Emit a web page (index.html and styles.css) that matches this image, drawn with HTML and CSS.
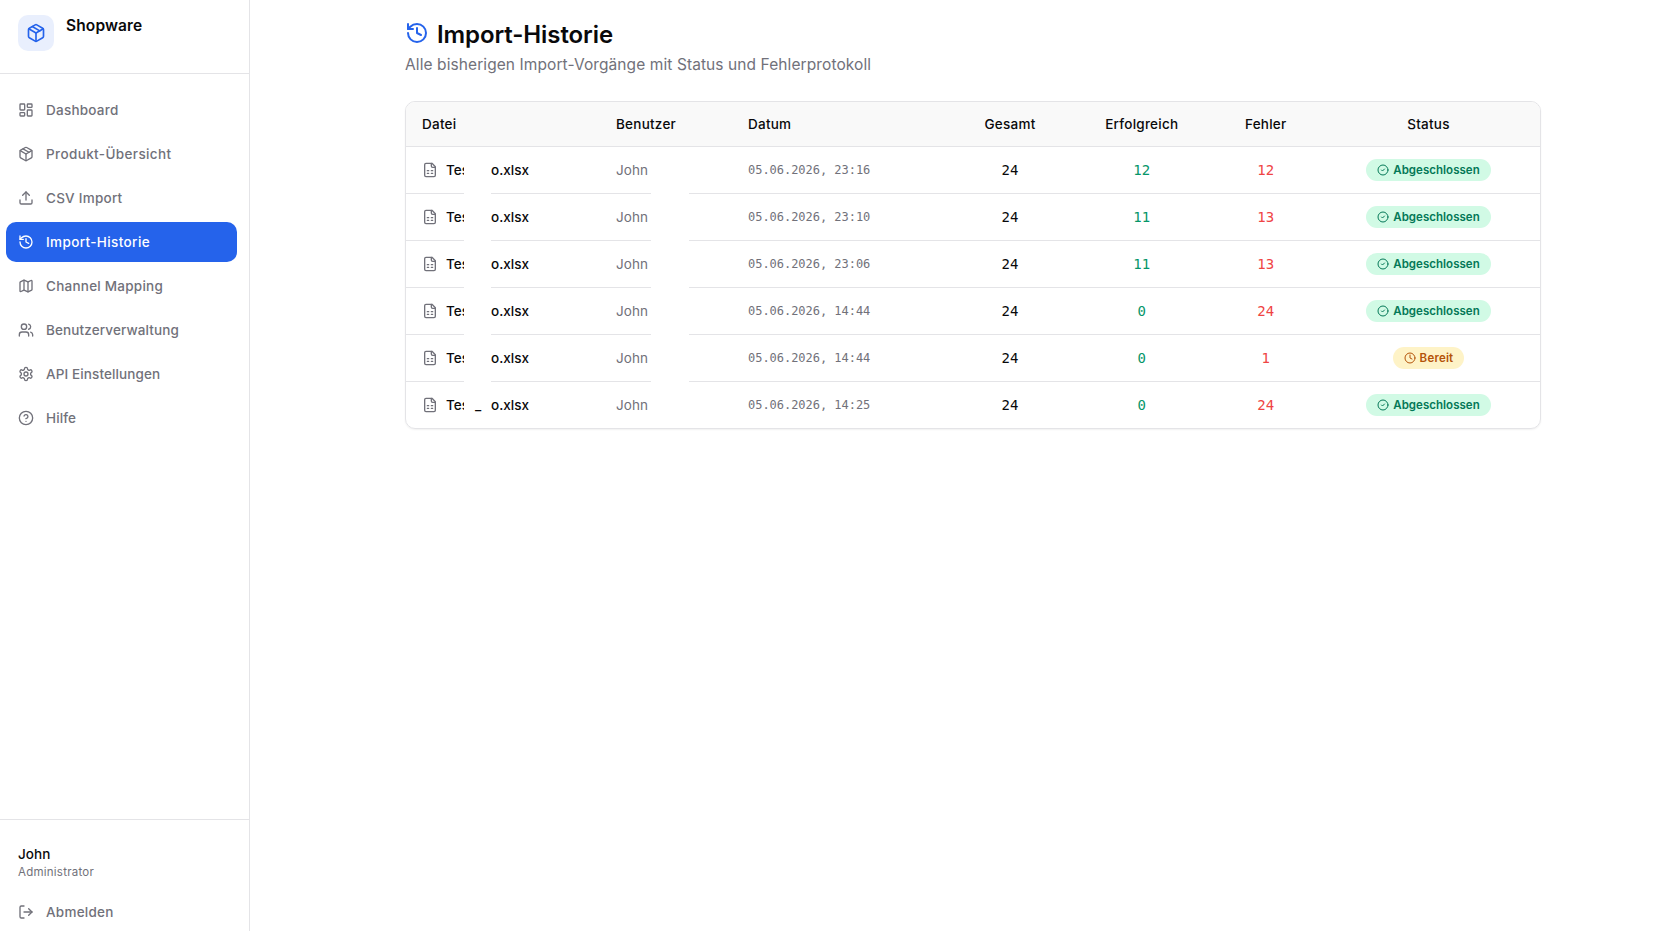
FILE: index.html
```html
<!DOCTYPE html>
<html lang="de">
<head>
<meta charset="utf-8">
<title>Import-Historie</title>
<link rel="stylesheet" href="styles.css">
</head>
<body>
<svg class="sprite" aria-hidden="true">
  <symbol id="box" viewBox="0 0 24 24"><path d="m7.5 4.27 9 5.15"/><path d="M21 8a2 2 0 0 0-1-1.73l-7-4a2 2 0 0 0-2 0l-7 4A2 2 0 0 0 3 8v8a2 2 0 0 0 1 1.73l7 4a2 2 0 0 0 2 0l7-4A2 2 0 0 0 21 16Z"/><path d="m3.3 7 8.7 5 8.7-5"/><path d="M12 22V12"/></symbol>
  <symbol id="dash" viewBox="0 0 24 24"><rect width="7" height="9" x="3" y="3" rx="1"/><rect width="7" height="5" x="14" y="3" rx="1"/><rect width="7" height="9" x="14" y="12" rx="1"/><rect width="7" height="5" x="3" y="16" rx="1"/></symbol>
  <symbol id="upload" viewBox="0 0 24 24"><path d="M21 15v4a2 2 0 0 1-2 2H5a2 2 0 0 1-2-2v-4"/><path d="m17 8-5-5-5 5"/><path d="M12 3v12"/></symbol>
  <symbol id="history" viewBox="0 0 24 24"><path d="M3 12a9 9 0 1 0 9-9 9.75 9.75 0 0 0-6.74 2.74L3 8"/><path d="M3 3v5h5"/><path d="M12 7v5l4 2"/></symbol>
  <symbol id="map" viewBox="0 0 24 24"><path d="M14.106 5.553a2 2 0 0 0 1.788 0l3.659-1.83A1 1 0 0 1 21 4.619v12.764a1 1 0 0 1-.553.894l-4.553 2.277a2 2 0 0 1-1.788 0l-4.212-2.106a2 2 0 0 0-1.788 0l-3.659 1.83A1 1 0 0 1 3 19.381V6.618a1 1 0 0 1 .553-.894l4.553-2.277a2 2 0 0 1 1.788 0z"/><path d="M15 5.764v15"/><path d="M9 3.236v15"/></symbol>
  <symbol id="users" viewBox="0 0 24 24"><path d="M16 21v-2a4 4 0 0 0-4-4H6a4 4 0 0 0-4 4v2"/><circle cx="9" cy="7" r="4"/><path d="M22 21v-2a4 4 0 0 0-3-3.87"/><path d="M16 3.13a4 4 0 0 1 0 7.75"/></symbol>
  <symbol id="gear" viewBox="0 0 24 24"><path d="M12.22 2h-.44a2 2 0 0 0-2 2v.18a2 2 0 0 1-1 1.73l-.43.25a2 2 0 0 1-2 0l-.15-.08a2 2 0 0 0-2.73.73l-.22.38a2 2 0 0 0 .73 2.73l.15.1a2 2 0 0 1 1 1.72v.51a2 2 0 0 1-1 1.74l-.15.09a2 2 0 0 0-.73 2.73l.22.38a2 2 0 0 0 2.73.73l.15-.08a2 2 0 0 1 2 0l.43.25a2 2 0 0 1 1 1.73V20a2 2 0 0 0 2 2h.44a2 2 0 0 0 2-2v-.18a2 2 0 0 1 1-1.73l.43-.25a2 2 0 0 1 2 0l.15.08a2 2 0 0 0 2.73-.73l.22-.39a2 2 0 0 0-.73-2.73l-.15-.08a2 2 0 0 1-1-1.74v-.5a2 2 0 0 1 1-1.74l.15-.09a2 2 0 0 0 .73-2.73l-.22-.38a2 2 0 0 0-2.73-.73l-.15.08a2 2 0 0 1-2 0l-.43-.25a2 2 0 0 1-1-1.73V4a2 2 0 0 0-2-2z"/><circle cx="12" cy="12" r="3"/></symbol>
  <symbol id="help" viewBox="0 0 24 24"><circle cx="12" cy="12" r="10"/><path d="M9.09 9a3 3 0 0 1 5.83 1c0 2-3 3-3 3"/><path d="M12 17h.01"/></symbol>
  <symbol id="logout" viewBox="0 0 24 24"><path d="M9 21H5a2 2 0 0 1-2-2V5a2 2 0 0 1 2-2h4"/><path d="m16 17 5-5-5-5"/><path d="M21 12H9"/></symbol>
  <symbol id="sheet" viewBox="0 0 24 24"><path d="M15 2H6a2 2 0 0 0-2 2v16a2 2 0 0 0 2 2h12a2 2 0 0 0 2-2V7Z"/><path d="M14 2v4a2 2 0 0 0 2 2h4"/><path d="M8 13h2M14 13h2M8 17h2M14 17h2"/></symbol>
  <symbol id="check" viewBox="0 0 24 24"><circle cx="12" cy="12" r="10"/><path d="m9 12 2 2 4-4"/></symbol>
  <symbol id="clock" viewBox="0 0 24 24"><circle cx="12" cy="12" r="10"/><path d="M12 6v6l4 2"/></symbol>
</svg>
<div class="app">
  <aside class="sidebar">
    <div class="brand">
      <span class="logo"><svg class="icon i20"><use href="#box"/></svg></span>
      <span class="brand-name">Shopware</span>
    </div>
    <nav class="nav">
      <a class="item"><svg class="icon"><use href="#dash"/></svg><span>Dashboard</span></a>
      <a class="item wide"><svg class="icon"><use href="#box"/></svg><span>Produkt-Übersicht</span></a>
      <a class="item"><svg class="icon"><use href="#upload"/></svg><span>CSV Import</span></a>
      <a class="item wide active"><svg class="icon"><use href="#history"/></svg><span>Import-Historie</span></a>
      <a class="item"><svg class="icon"><use href="#map"/></svg><span>Channel Mapping</span></a>
      <a class="item tight"><svg class="icon"><use href="#users"/></svg><span>Benutzerverwaltung</span></a>
      <a class="item tight"><svg class="icon"><use href="#gear"/></svg><span>API Einstellungen</span></a>
      <a class="item tight"><svg class="icon"><use href="#help"/></svg><span>Hilfe</span></a>
    </nav>
    <div class="account">
      <div class="user">John</div>
      <div class="role">Administrator</div>
      <a class="item logout"><svg class="icon"><use href="#logout"/></svg><span>Abmelden</span></a>
    </div>
  </aside>
  <main class="main">
    <h1 class="title"><svg class="icon i24"><use href="#history"/></svg><span>Import-Historie</span></h1>
    <p class="subtitle">Alle bisherigen Import-Vorgänge mit Status und Fehlerprotokoll</p>
    <div class="table">
      <div class="row head"><div>Datei</div><div>Benutzer</div><div>Datum</div><div class="c">Gesamt</div><div class="c">Erfolgreich</div><div class="c">Fehler</div><div class="c">Status</div></div>
      <div class="row"><div class="file"><svg class="icon"><use href="#sheet"/></svg><span class="pre">Tes</span><span class="gap"></span><span>o.xlsx</span></div><div class="by">John</div><div class="date">05.06.2026, 23:16</div><div class="c num">24</div><div class="c num ok">12</div><div class="c num err">12</div><div class="c"><span class="badge done"><svg class="icon i12"><use href="#check"/></svg>Abgeschlossen</span></div></div>
      <div class="row"><div class="file"><svg class="icon"><use href="#sheet"/></svg><span class="pre">Tes</span><span class="gap"></span><span>o.xlsx</span></div><div class="by">John</div><div class="date">05.06.2026, 23:10</div><div class="c num">24</div><div class="c num ok">11</div><div class="c num err">13</div><div class="c"><span class="badge done"><svg class="icon i12"><use href="#check"/></svg>Abgeschlossen</span></div></div>
      <div class="row"><div class="file"><svg class="icon"><use href="#sheet"/></svg><span class="pre">Tes</span><span class="gap"></span><span>o.xlsx</span></div><div class="by">John</div><div class="date">05.06.2026, 23:06</div><div class="c num">24</div><div class="c num ok">11</div><div class="c num err">13</div><div class="c"><span class="badge done"><svg class="icon i12"><use href="#check"/></svg>Abgeschlossen</span></div></div>
      <div class="row"><div class="file"><svg class="icon"><use href="#sheet"/></svg><span class="pre">Tes</span><span class="gap"></span><span>o.xlsx</span></div><div class="by">John</div><div class="date">05.06.2026, 14:44</div><div class="c num">24</div><div class="c num ok">0</div><div class="c num err">24</div><div class="c"><span class="badge done"><svg class="icon i12"><use href="#check"/></svg>Abgeschlossen</span></div></div>
      <div class="row"><div class="file"><svg class="icon"><use href="#sheet"/></svg><span class="pre">Tes</span><span class="gap"></span><span>o.xlsx</span></div><div class="by">John</div><div class="date">05.06.2026, 14:44</div><div class="c num">24</div><div class="c num ok">0</div><div class="c num err">1</div><div class="c"><span class="badge ready"><svg class="icon i12"><use href="#clock"/></svg>Bereit</span></div></div>
      <div class="row"><div class="file"><svg class="icon"><use href="#sheet"/></svg><span class="pre">Tes</span><span class="gap">_</span><span>o.xlsx</span></div><div class="by">John</div><div class="date">05.06.2026, 14:25</div><div class="c num">24</div><div class="c num ok">0</div><div class="c num err">24</div><div class="c"><span class="badge done"><svg class="icon i12"><use href="#check"/></svg>Abgeschlossen</span></div></div>
    </div>
  </main>
</div>
</body>
</html>
```
FILE: styles.css
```css
* { box-sizing: border-box; }
body {
  margin: 0;
  background: #fff;
  color: #09090b;
  font: 13.5px/20px Inter, "Open Sans", sans-serif;
}
.sprite { position: absolute; width: 0; height: 0; }
.icon {
  width: 16px;
  height: 16px;
  flex: none;
  fill: none;
  stroke: currentColor;
  stroke-width: 2;
  stroke-linecap: round;
  stroke-linejoin: round;
}
.i20 { width: 20px; height: 20px; }
.i24 { width: 24px; height: 24px; }
.i12 { width: 12px; height: 12px; }
.app { display: flex; height: 931px; overflow: hidden; }

.sidebar {
  width: 250px;
  flex: none;
  display: flex;
  flex-direction: column;
  border-right: 1px solid #e4e4e7;
}
.brand {
  display: flex;
  gap: 12px;
  height: 74px;
  padding: 15px 18px 0;
  border-bottom: 1px solid #e4e4e7;
}
.logo {
  display: grid;
  place-items: center;
  width: 36px;
  height: 36px;
  border-radius: 10px;
  background: #e9effd;
  color: #2563eb;
}
.brand-name { padding-top: 1px; font-size: 15.5px; font-weight: 600; letter-spacing: .13px; }
.nav { flex: 1; display: flex; flex-direction: column; gap: 4px; padding: 16px 12px 0 6px; }
.item {
  display: flex;
  align-items: center;
  gap: 12px;
  height: 40px;
  padding: 0 12px;
  border-radius: 10px;
  color: #71717a;
  font-weight: 450;
  letter-spacing: .24px;
}
.item.wide { letter-spacing: .38px; }
.item.tight { letter-spacing: .12px; }
.item.active { background: #2563eb; color: #fff; font-weight: 500; }
.account { height: 112px; padding: 24px 18px 0; border-top: 1px solid #e4e4e7; }
.user { font-weight: 450; letter-spacing: .1px; }
.role { color: #71717a; font-size: 11.5px; line-height: 16px; letter-spacing: .24px; }
.logout { padding: 0; margin-top: 12px; }

.main { flex: 1; padding: 20px 124px 0 155px; }
.title {
  display: flex;
  align-items: center;
  gap: 8px;
  height: 28px;
  margin: 0;
  font-size: 24px;
  font-weight: 600;
  letter-spacing: -.1px;
}
.title .icon { color: #2563eb; margin-top: -3px; }
.title span { padding-top: 2px; }
.subtitle { margin: 4px 0 24px; color: #71717a; font-size: 15.5px; line-height: 25px; letter-spacing: .09px; }
.table {
  overflow: hidden;
  border: 1px solid #e4e4e7;
  border-radius: 10px;
  box-shadow: 0 1px 2px rgba(0, 0, 0, .06);
}
.row {
  position: relative;
  display: grid;
  grid-template-columns: 194px 132px 219px 118px 145.5px 102.5px 223px;
  align-items: center;
  height: 47px;
}
.row > div { padding: 0 16px; }
.row:not(:last-child) { border-bottom: 1px solid #e4e4e7; }
.row:last-child { height: 46px; }
.row.head { height: 45px; background: #f9f9f9; font-weight: 450; letter-spacing: .24px; }
.row > .c { padding: 0; text-align: center; }

/* Breaks in the separator lines between the data rows */
.row:not(.head):not(:last-child)::before,
.row:not(.head):not(:last-child)::after {
  content: "";
  position: absolute;
  bottom: -1px;
  height: 1px;
  background: #fff;
}
.row::before { left: 58px; width: 27px; }
.row::after { left: 245px; width: 38px; }

.file { display: flex; align-items: center; font-weight: 450; }
.file .icon { color: #71717a; }
.pre { width: 18px; margin-left: 8px; overflow: hidden; }
.gap { width: 27px; padding-left: 11px; }
.by { color: #71717a; letter-spacing: .1px; }
.date, .num { font-family: "DejaVu Sans Mono", monospace; }
.date { color: #71717a; font-size: 12px; letter-spacing: -.03px; }
.num { font-size: 14px; }
.ok { color: #059669; }
.err { color: #ef4444; }
.badge {
  display: inline-flex;
  align-items: center;
  gap: 4px;
  height: 22px;
  padding: 0 11px;
  border-radius: 11px;
  font-size: 11.5px;
  font-weight: 600;
  letter-spacing: .03px;
  vertical-align: middle;
}
.done { background: #d1fae5; color: #047857; }
.ready { background: #fef3c7; color: #b45309; letter-spacing: .2px; }
```
